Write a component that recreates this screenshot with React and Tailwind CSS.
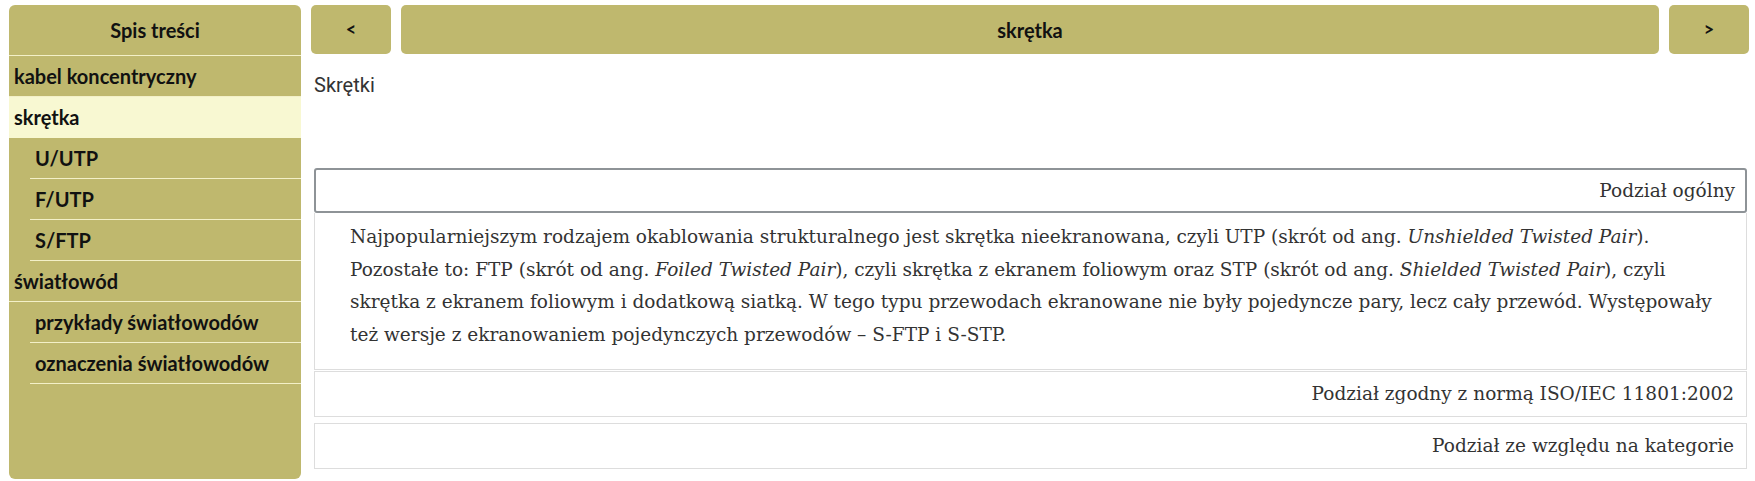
import React from 'react';

const toc = [
  { label: 'kabel koncentryczny', level: 0 },
  { label: 'skrętka', level: 0, active: true },
  { label: 'U/UTP', level: 1 },
  { label: 'F/UTP', level: 1 },
  { label: 'S/FTP', level: 1 },
  { label: 'światłowód', level: 0 },
  { label: 'przykłady światłowodów', level: 1 },
  { label: 'oznaczenia światłowodów', level: 1 },
];

const lato = { fontFamily: 'Lato, "Noto Sans", sans-serif' };

const Sidebar = () => (
  <aside className="w-[292px] shrink-0 bg-[#bfb86e] rounded-md flex flex-col text-[20px] font-bold text-[#111]" style={lato}>
    <div className="h-[51px] flex items-center justify-center border-b border-[#f3f0c8]">Spis treści</div>
    {toc.map((item, i) => (
      <div
        key={i}
        className={
          item.level === 0
            ? `h-[41px] flex items-center pl-[5px] border-b border-[#f3f0c8] ${item.active ? 'bg-[#f8f8d2] border-[#f8f8d2]' : ''}`
            : 'h-[41px] flex items-center ml-[21px] pl-[5px] border-b border-[#f3f0c8]'
        }
      >
        {item.label}
      </div>
    ))}
  </aside>
);

const NavButton = ({ children, grow }) => (
  <button
    className={`h-[49px] rounded-[5px] bg-[#bfb86e] text-[#111] font-bold flex items-center justify-center ${grow ? 'flex-1 min-w-0 text-[20px]' : 'w-[80px] shrink-0 text-[18px]'}`}
    style={lato}
  >
    {children}
  </button>
);

const slab = { fontFamily: '"DejaVu Serif", "Liberation Serif", serif' };

const App = () => {
  return (
    <div className="w-[1755px] h-[481px] bg-white flex gap-[10px] pl-[9px] pr-[6px] pt-[5px] pb-[2px] overflow-hidden">
      <Sidebar />
      <main className="flex-1 min-w-0 flex flex-col">
        <div className="flex gap-[10px]">
          <NavButton>&lt;</NavButton>
          <NavButton grow>skrętka</NavButton>
          <NavButton>&gt;</NavButton>
        </div>
        <div className="pl-[3px] pr-[2px]">
          <p className="mt-[16px] text-[20px] text-[#333]" style={{ fontFamily: 'Roboto, sans-serif' }}>Skrętki</p>
          <div className="mt-[68px] text-[#333] text-[18.5px]" style={slab}>
            <div className="h-[45px] border-2 border-[#8e9397] rounded-[3px] flex items-center justify-end pr-[10px]">Podział ogólny</div>
            <div className="border border-t-0 border-[#ddd] pl-[35px] pr-[4px] pt-[8px] pb-[18px] leading-[32.5px] whitespace-nowrap">
              Najpopularniejszym rodzajem okablowania strukturalnego jest skrętka nieekranowana, czyli UTP (skrót od ang. <i>Unshielded Twisted Pair</i>).
              <br />
              Pozostałe to: FTP (skrót od ang. <i>Foiled Twisted Pair</i>), czyli skrętka z ekranem foliowym oraz STP (skrót od ang. <i>Shielded Twisted Pair</i>), czyli
              <br />
              skrętka z ekranem foliowym i dodatkową siatką. W tego typu przewodach ekranowane nie były pojedyncze pary, lecz cały przewód. Występowały
              <br />
              też wersje z ekranowaniem pojedynczych przewodów – S-FTP i S-STP.
            </div>
            <div className="h-[46px] mt-px border border-[#ddd] flex items-center justify-end pr-[12px]">Podział zgodny z normą ISO/IEC 11801:2002</div>
            <div className="h-[46px] mt-[6px] border border-[#ddd] flex items-center justify-end pr-[12px]">Podział ze względu na kategorie</div>
          </div>
        </div>
      </main>
    </div>
  );
};

export default App;
